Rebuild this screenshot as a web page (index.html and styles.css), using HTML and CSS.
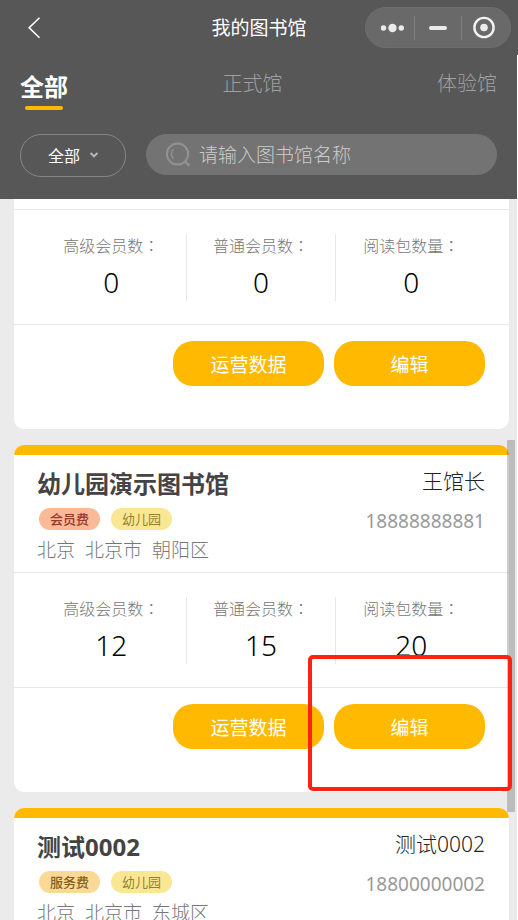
FILE: index.html
```html
<!DOCTYPE html>
<html lang="zh-CN">
<head>
<meta charset="utf-8">
<meta name="viewport" content="width=device-width, initial-scale=1">
<title>我的图书馆</title>
<link rel="stylesheet" href="styles.css">
</head>
<body>
<div class="app">
  <header class="topbar">
    <button class="back" type="button" aria-label="返回">
      <svg width="14" height="22" viewBox="0 0 14 22"><path d="M12.5 .7 2.2 10.7l10.3 10" fill="none" stroke="#fff" stroke-width="1.6"/></svg>
    </button>
    <h1 class="page-title">我的图书馆</h1>
    <div class="capsule">
      <button type="button" aria-label="更多"><svg width="26" height="24" viewBox="0 0 26 24"><g fill="#ebebeb"><circle cx="5.5" cy="12" r="2.7"/><circle cx="14.5" cy="12" r="4.2"/><circle cx="23.3" cy="12" r="2.7"/></g></svg></button>
      <button type="button" aria-label="最小化"><svg width="26" height="24" viewBox="0 0 26 24"><rect x="4" y="10" width="18" height="4" rx="2" fill="#ebebeb"/></svg></button>
      <button type="button" aria-label="关闭"><svg width="26" height="24" viewBox="0 0 26 24"><circle cx="12" cy="11.5" r="9.6" fill="none" stroke="#f2f2f2" stroke-width="2.4"/><circle cx="12" cy="11.5" r="3.8" fill="#ebebeb"/></svg></button>
    </div>
  </header>

  <section class="filters">
    <nav class="tabs">
      <button class="tab active" type="button">全部</button>
      <button class="tab" type="button">正式馆</button>
      <button class="tab" type="button">体验馆</button>
    </nav>
    <div class="filter-row">
      <div class="picker">
        <select aria-label="类型"><option>全部</option></select>
        <svg class="caret" width="10" height="8" viewBox="0 0 10 8"><path d="M1.5 2 5 5.3 8.5 2" fill="none" stroke="#b5b5b5" stroke-width="2"/></svg>
      </div>
      <label class="search">
        <svg width="26" height="26" viewBox="0 0 26 26" fill="none" stroke="#929292"><circle cx="11.5" cy="12" r="10.6" stroke-width="2"/><path d="M7.5 7.2a6.6 6.6 0 0 0 0 9.6" stroke-width="1.5"/><path d="m19 19.5 4.5 4.2" stroke-width="2.4"/></svg>
        <input type="text" placeholder="请输入图书馆名称" aria-label="请输入图书馆名称">
      </label>
    </div>
  </section>

  <main class="list">
    <article class="card continued">
      <dl class="stats">
        <div><dt>高级会员数<span class="colon" lang="zh-TW">：</span></dt><dd>0</dd></div>
        <div><dt>普通会员数<span class="colon" lang="zh-TW">：</span></dt><dd>0</dd></div>
        <div><dt>阅读包数量<span class="colon" lang="zh-TW">：</span></dt><dd>0</dd></div>
      </dl>
      <div class="actions">
        <button type="button">运营数据</button>
        <button type="button">编辑</button>
      </div>
    </article>

    <article class="card">
      <div class="info">
        <div class="library">
          <h2>幼儿园演示图书馆</h2>
          <div class="tags"><span class="tag member">会员费</span><span class="tag">幼儿园</span></div>
          <div class="address"><span>北京</span><span>北京市</span><span>朝阳区</span></div>
        </div>
        <div class="contact">
          <div class="person">王馆长</div>
          <div class="phone">18888888881</div>
        </div>
      </div>
      <dl class="stats">
        <div><dt>高级会员数<span class="colon" lang="zh-TW">：</span></dt><dd>12</dd></div>
        <div><dt>普通会员数<span class="colon" lang="zh-TW">：</span></dt><dd>15</dd></div>
        <div><dt>阅读包数量<span class="colon" lang="zh-TW">：</span></dt><dd>20</dd></div>
      </dl>
      <div class="actions">
        <button type="button">运营数据</button>
        <button type="button">编辑</button>
      </div>
      <div class="highlight"></div>
    </article>

    <article class="card">
      <div class="info">
        <div class="library">
          <h2>测试0002</h2>
          <div class="tags"><span class="tag service">服务费</span><span class="tag">幼儿园</span></div>
          <div class="address"><span>北京</span><span>北京市</span><span>东城区</span></div>
        </div>
        <div class="contact">
          <div class="person">测试0002</div>
          <div class="phone">18800000002</div>
        </div>
      </div>
    </article>
    <div class="scroll-thumb"></div>
  </main>
</div>
</body>
</html>
```
FILE: styles.css
```css
* { box-sizing: border-box; }

body {
  margin: 0;
  background: #fff;
  font-family: "Noto Sans", "Noto Sans CJK SC", sans-serif;
}

h1, h2, dl, dd { margin: 0; }

button, input, select {
  font-family: inherit;
  border: 0;
  padding: 0;
  margin: 0;
  background: none;
}

svg { display: block; }

.app {
  display: flex;
  flex-direction: column;
  height: 100vh;
  overflow: hidden;
}

/* Top bar */
.topbar {
  display: grid;
  grid-template-columns: 1fr auto 1fr;
  align-items: center;
  height: 55px;
  flex: none;
  padding: 0 7px;
  background: #575757;
  color: #fff;
}

.back {
  justify-self: start;
  padding: 0 20px;
}

.page-title {
  font-size: 19px;
  line-height: 28px;
  font-weight: 400;
}

.capsule {
  justify-self: end;
  display: flex;
  align-items: center;
  width: 146px;
  height: 41px;
  padding: 0 2px;
  border: 1px solid #6e6e6e;
  border-radius: 21px;
  background: #696969;
}

.capsule button {
  flex: 1;
  display: flex;
  justify-content: center;
}

.capsule button + button { border-left: 1px solid #7d7d7d; }

/* Tabs and filters */
.filters {
  flex: none;
  margin-right: 1px;
  padding: 12px 20px 22px;
  background: #575757;
}

.tabs {
  display: flex;
  justify-content: space-between;
  align-items: flex-start;
}

.tab {
  color: #a0a0a0;
  font-size: 20px;
  line-height: 34px;
  font-weight: 300;
}

.tab.active {
  color: #fff;
  font-size: 24px;
  line-height: 39px;
  font-weight: 700;
}

.tab.active::after {
  content: "";
  display: block;
  width: 38px;
  height: 4px;
  margin: 0 auto;
  border-radius: 2px;
  background: #ffb900;
}

.filter-row {
  display: flex;
  align-items: flex-start;
  gap: 20px;
  margin-top: 24px;
}

.picker {
  position: relative;
  flex: none;
  width: 106px;
}

.picker select {
  appearance: none;
  display: block;
  width: 100%;
  height: 43px;
  padding-left: 27px;
  border: 1px solid #868686;
  border-radius: 21px;
  color: #fff;
  font-size: 16px;
}

.caret {
  position: absolute;
  right: 27px;
  top: 17px;
  pointer-events: none;
}

.search {
  flex: 1;
  display: flex;
  align-items: center;
  gap: 7px;
  height: 41px;
  padding: 0 20px;
  border-radius: 21px;
  background: #737373;
}

.search input {
  flex: 1;
  min-width: 0;
  height: 28px;
  color: #fff;
  font-size: 19px;
  font-weight: 300;
  outline: 0;
}

.search input::placeholder { color: #ccc; opacity: 1; }

/* Library cards */
.list {
  position: relative;
  flex: 1;
  min-height: 0;
  overflow: hidden;
  margin-right: 1px;
  padding: 0 8px 0 14px;
  background: #ebebeb;
}

.card {
  position: relative;
  margin-bottom: 16px;
  background: #fff;
  border-radius: 10px;
}

.card::before {
  content: "";
  display: block;
  height: 10px;
  border-radius: 10px 10px 0 0;
  background: #ffb900;
}

.card.continued { border-radius: 0 0 10px 10px; }
.card.continued::before { background: #fff; border-radius: 0; }

.info {
  display: flex;
  justify-content: space-between;
  height: 117px;
  padding: 11px 24px 0 23px;
}

.library h2 {
  color: #444;
  font-size: 24px;
  line-height: 36px;
  font-weight: 700;
}

.tags {
  display: flex;
  gap: 11px;
  margin: 6px 2px 7px;
}

.tag {
  padding: 0 11px;
  border-radius: 11px;
  background: #f9e793;
  color: #96802f;
  font-size: 13px;
  line-height: 22px;
}

.tag.member { background: #fab997; color: #96382b; font-weight: 500; }
.tag.service { background: #fad996; color: #85601a; font-weight: 500; }

.address {
  display: flex;
  gap: 10px;
  color: #777;
  font-size: 19px;
  line-height: 26px;
  font-weight: 300;
}

.contact { text-align: right; }

.person {
  color: #222;
  font-size: 21px;
  line-height: 30px;
  font-weight: 300;
}

.phone {
  margin-top: 11px;
  color: #999;
  font-size: 19px;
  line-height: 28px;
}

.stats {
  display: grid;
  grid-template-columns: repeat(3, 1fr);
  height: 116px;
  padding: 24px 23px 23px;
  border: solid #e8e8e8;
  border-width: 1px 0;
}

.stats > div {
  text-align: center;
  border-right: 1px solid #e8e8e8;
}

.stats > div:last-child { border-right: 0; }

.stats dt {
  color: #777;
  font-size: 16px;
  line-height: 22px;
  font-weight: 300;
}

.colon { font-family: "Noto Sans CJK TC", sans-serif; }

.stats dd {
  margin-top: 6px;
  color: #000;
  font-size: 28px;
  line-height: 38px;
  font-weight: 300;
}

.actions {
  display: flex;
  justify-content: flex-end;
  gap: 10px;
  padding: 16px 24px 43px;
}

.actions button {
  width: 151px;
  height: 45px;
  border-radius: 20px;
  background: #ffb900;
  color: #fff;
  font-size: 19px;
}

.highlight {
  position: absolute;
  z-index: 2;
  right: -3px;
  bottom: 1px;
  width: 204px;
  height: 136px;
  border: 4px solid #ff2114;
  border-radius: 5px;
}

.scroll-thumb {
  position: absolute;
  z-index: 1;
  top: 241px;
  right: 2px;
  width: 8px;
  height: 372px;
  background: rgba(0, 0, 0, 0.2);
}
```
